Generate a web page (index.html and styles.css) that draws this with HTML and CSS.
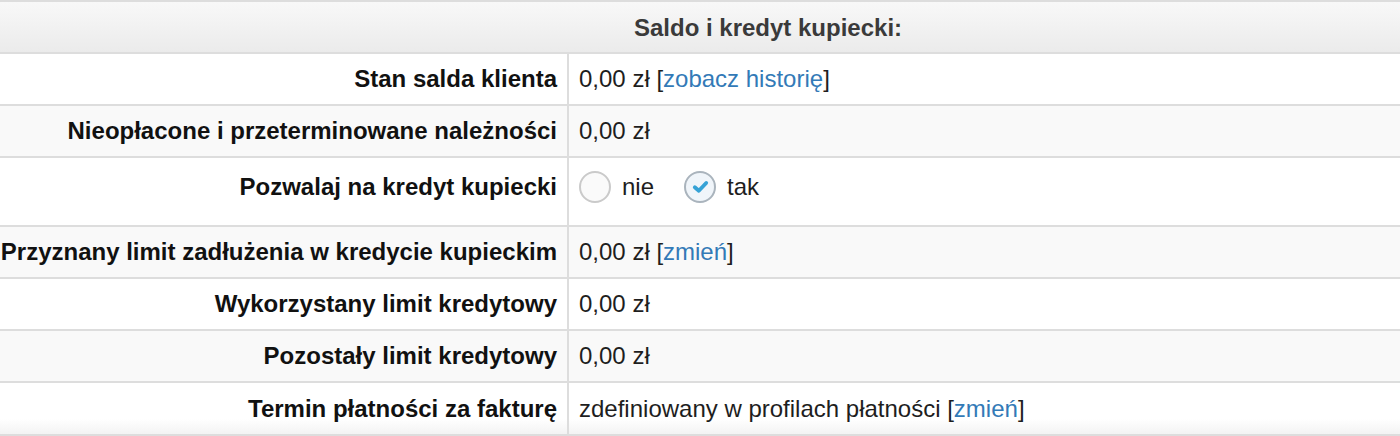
FILE: index.html
```html
<!DOCTYPE html>
<html lang="pl">
<head>
<meta charset="utf-8">
<link rel="stylesheet" href="styles.css">
</head>
<body>
<table class="credit">
  <colgroup><col class="c-lbl"><col class="c-val"></colgroup>
  <thead>
    <tr><th colspan="2" class="head"><span class="head-text">Saldo i kredyt kupiecki:</span></th></tr>
  </thead>
  <tbody>
    <tr><td class="lbl">Stan salda klienta</td><td class="val">0,00 zł [<a href="#">zobacz historię</a>]</td></tr>
    <tr class="alt"><td class="lbl">Nieopłacone i przeterminowane należności</td><td class="val">0,00 zł</td></tr>
    <tr class="tall"><td class="lbl">Pozwalaj na kredyt kupiecki</td><td class="val">
      <div class="radios">
        <label class="radio"><span class="dot"></span>nie</label>
        <label class="radio"><span class="dot on"><svg viewBox="0 0 16 16" width="19" height="19"><path d="M3.2 8.6 L6.6 11.6 L12.8 5" fill="none" stroke="#36a2d6" stroke-width="3.2" stroke-linecap="round" stroke-linejoin="round"/></svg></span>tak</label>
      </div>
    </td></tr>
    <tr class="alt"><td class="lbl">Przyznany limit zadłużenia w kredycie kupieckim</td><td class="val">0,00 zł [<a href="#">zmień</a>]</td></tr>
    <tr><td class="lbl">Wykorzystany limit kredytowy</td><td class="val">0,00 zł</td></tr>
    <tr class="alt"><td class="lbl">Pozostały limit kredytowy</td><td class="val">0,00 zł</td></tr>
    <tr><td class="lbl">Termin płatności za fakturę</td><td class="val">zdefiniowany w profilach płatności [<a href="#">zmień</a>]</td></tr>
  </tbody>
</table>
</body>
</html>
```
FILE: styles.css
```css
html, body {
  margin: 0;
  padding: 0;
  background: #fff;
}
body {
  font-family: "Liberation Sans", Arial, sans-serif;
  font-size: 24px;
  color: #222;
}
.credit {
  width: 1400px;
  border-collapse: collapse;
  table-layout: fixed;
}
.c-lbl { width: 568px; }
.credit th, .credit td {
  border: 2px solid #dddddd;
  padding: 0 10px;
  height: 50px;
  box-sizing: border-box;
  vertical-align: middle;
  white-space: nowrap;
}
.credit tr > :first-child { border-left: none; }
.credit tr > :last-child { border-right: none; }
.credit .head {
  height: 52px;
  background: linear-gradient(#f8f8f8, #ebebeb);
  text-align: center;
  font-weight: bold;
  color: #3a3a3a;
  padding-left: 146px;
  padding-top: 2px;
}
.credit .lbl {
  text-align: right;
  font-weight: bold;
  color: #111;
  height: 52px;
  padding-right: 10px;
  padding-left: 0;
}
.credit .val {
  text-align: left;
  color: #1e1e1e;
}
.credit tr.alt td { background: #f9f9f9; }
.credit tr.tall td { height: 69px; padding-bottom: 10px; }
.credit tbody tr:last-child td {
  height: 53px;
  background: linear-gradient(#fff 70%, #f3f3f3);
}
a {
  color: #337ab7;
  text-decoration: none;
}
.radios {
  display: flex;
  align-items: center;
  gap: 30px;
}
.radio {
  display: flex;
  align-items: center;
  gap: 11px;
}
.dot {
  width: 32px;
  height: 32px;
  box-sizing: border-box;
  border: 2px solid #cacaca;
  border-radius: 50%;
  background: #fafafa;
  display: flex;
  align-items: center;
  justify-content: center;
}
.dot.on {
  border-color: #aab4bd;
  background: #f0f5fa;
}
```
